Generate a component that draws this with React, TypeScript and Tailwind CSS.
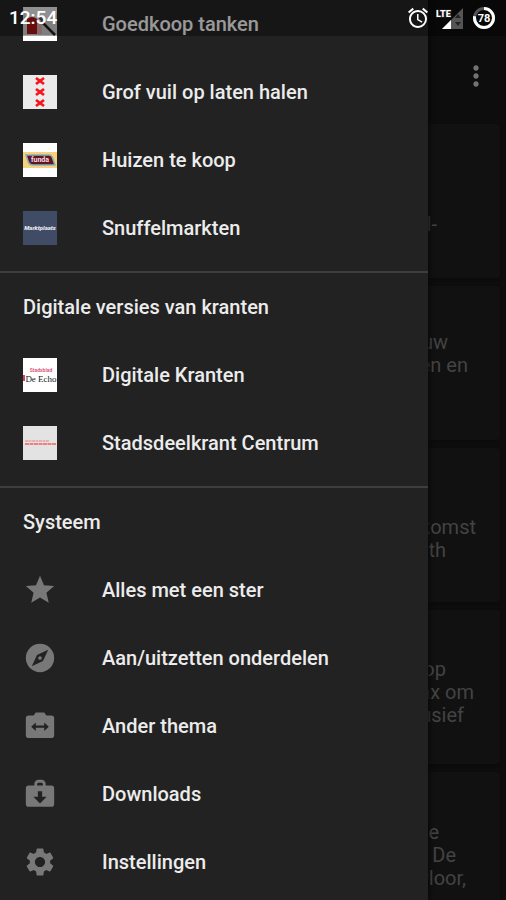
import type { ReactNode } from "react";
import { MdAccessAlarm, MdMoreVert, MdSettings, MdStar } from "react-icons/md";

type Item = { label: string; icon: ReactNode };
type Section = { title?: string; items: Item[] };
type Line = { text: string; end: number };

const tile = "h-[34px] w-[34px]";
const glyph = "h-[34px] w-[34px] text-[#787878]";

function FuelIcon() {
  return (
    <svg viewBox="0 0 34 34" className={tile} aria-hidden="true">
      <rect width="34" height="34" fill="#fff" />
      <rect width="34" height="28" fill="#c4c4c4" />
      <path d="M0 0h34v7L20 16 4 12z" fill="#dedede" />
      <path d="M4 12q5-4 10 0v15H4z" fill="#a01515" />
      <path d="M14 14h5v13h-5z" fill="#cfa0a0" />
      <path d="M20 16l12 12" stroke="#1c1c1c" strokeWidth="2.5" />
      <path d="M16 9l5 7" stroke="#555" strokeWidth="3" />
    </svg>
  );
}

function CrossesIcon() {
  return (
    <svg viewBox="0 0 34 34" className={tile} aria-hidden="true">
      <rect width="34" height="34" fill="#ebebeb" />
      <path
        d="M13 3l8 6M21 3l-8 6M13 14l8 6M21 14l-8 6M13 25l8 6M21 25l-8 6"
        stroke="#f5151b"
        strokeWidth="2.8"
      />
    </svg>
  );
}

function FundaIcon() {
  return (
    <svg viewBox="0 0 34 34" className={tile} aria-hidden="true">
      <rect width="34" height="34" fill="#fff" />
      <rect y="9" width="34" height="16" fill="#fbd07a" />
      <path
        d="M3 12h23q3 0 4 4l2 6H10q-4 0-5-4z"
        fill="#641522"
        stroke="#7fb4bd"
        strokeWidth="1.6"
      />
      <text
        x="17"
        y="19"
        textAnchor="middle"
        fontSize="7"
        fontWeight="700"
        fontFamily="Roboto, sans-serif"
        fill="#f3dfe0"
      >
        funda
      </text>
    </svg>
  );
}

function MarketIcon() {
  return (
    <svg viewBox="0 0 34 34" className={tile} aria-hidden="true">
      <rect width="34" height="34" fill="#404c66" />
      <text
        x="17"
        y="19"
        textAnchor="middle"
        fontSize="6"
        fontWeight="900"
        fontStyle="italic"
        fontFamily="Roboto, sans-serif"
        fill="#e4e6ea"
      >
        Marktplaats
      </text>
    </svg>
  );
}

function EchoIcon() {
  return (
    <svg viewBox="0 0 34 34" className={tile} aria-hidden="true">
      <rect width="34" height="34" fill="#fff" />
      <text
        x="18"
        y="14"
        textAnchor="middle"
        fontSize="5"
        fontWeight="700"
        fontFamily="Roboto, sans-serif"
        fill="#dc5a7c"
      >
        Stadsblad
      </text>
      <rect y="17" width="2" height="6" fill="#d0416a" />
      <text
        x="18"
        y="24"
        textAnchor="middle"
        fontSize="9"
        fontFamily="Liberation Serif, serif"
        fill="#222"
      >
        De Echo
      </text>
    </svg>
  );
}

function CentrumIcon() {
  return (
    <svg viewBox="0 0 34 34" className={tile} aria-hidden="true">
      <rect width="34" height="34" fill="#e3e3e3" />
      <path d="M2 15h24" stroke="#eda0a0" strokeWidth="1.5" strokeDasharray="3 .5" />
      <path d="M2 18h31" stroke="#ee8080" strokeWidth="2" strokeDasharray="4 .5" />
    </svg>
  );
}

function CompassIcon() {
  return (
    <svg viewBox="0 0 24 24" className={glyph} fill="currentColor" aria-hidden="true">
      <path
        fillRule="evenodd"
        d="M12 2a10 10 0 1 0 0 20 10 10 0 0 0 0-20zm5.800 4.200-3.700 7.900-7.900 3.700 3.700-7.900z"
      />
      <circle cx="12" cy="12" r="1.300" />
    </svg>
  );
}

function CameraSwitchIcon() {
  return (
    <svg viewBox="0 0 24 24" className={glyph} fill="currentColor" aria-hidden="true">
      <path
        fillRule="evenodd"
        d="M9 2.500 7.500 4.500H4a2 2 0 0 0-2 2v12a2 2 0 0 0 2 2h16a2 2 0 0 0 2-2v-12a2 2 0 0 0-2-2h-3.500L15 2.500zM9 9.500v2.200h6V9.500l3.200 3-3.200 3v-2.200H9v2.200l-3.200-3z"
      />
    </svg>
  );
}

function DownloadBagIcon() {
  return (
    <svg viewBox="0 0 24 24" className={glyph} fill="currentColor" aria-hidden="true">
      <path
        fillRule="evenodd"
        d="M8 6V5a3 3 0 0 1 3-3h2a3 3 0 0 1 3 3v1h4a2 2 0 0 1 2 2v11a2 2 0 0 1-2 2H4a2 2 0 0 1-2-2V8a2 2 0 0 1 2-2zm2 0h4V5a1 1 0 0 0-1-1h-2a1 1 0 0 0-1 1zm.5 4v4H7.300l4.700 4.700 4.700-4.700h-3.200v-4z"
      />
    </svg>
  );
}

function SignalIcon() {
  return (
    <svg viewBox="0 0 28 24" className="h-6 w-7" role="img" aria-label="LTE">
      <path d="M27 2v21H6z" fill="#555" />
      <path d="M15 14v9H6z" fill="#fff" />
      <path d="M19 12l3-4 3 4zM19 16l3 4 3-4z" fill="#222" />
      <text
        x="0"
        y="11"
        fontSize="9"
        fontWeight="900"
        fontFamily="Roboto, sans-serif"
        fill="#fff"
        stroke="#1a1a1a"
        strokeWidth="2"
        paintOrder="stroke"
      >
        LTE
      </text>
    </svg>
  );
}

function BatteryIcon() {
  return (
    <svg viewBox="0 0 24 24" className="h-6 w-6" role="img" aria-label="78%">
      <circle cx="12" cy="12" r="9.500" fill="none" stroke="#555" strokeWidth="3" />
      <circle
        cx="12"
        cy="12"
        r="9.500"
        fill="none"
        stroke="#fff"
        strokeWidth="3"
        pathLength="100"
        strokeDasharray="78 22"
        transform="rotate(-90 12 12)"
      />
      <text
        x="12"
        y="16"
        textAnchor="middle"
        fontSize="11"
        fontWeight="700"
        fontFamily="Roboto, sans-serif"
        fill="#fff"
      >
        78
      </text>
    </svg>
  );
}

const SECTIONS: Section[] = [
  {
    items: [
      { label: "Goedkoop tanken", icon: <FuelIcon /> },
      { label: "Grof vuil op laten halen", icon: <CrossesIcon /> },
      { label: "Huizen te koop", icon: <FundaIcon /> },
      { label: "Snuffelmarkten", icon: <MarketIcon /> },
    ],
  },
  {
    title: "Digitale versies van kranten",
    items: [
      { label: "Digitale Kranten", icon: <EchoIcon /> },
      { label: "Stadsdeelkrant Centrum", icon: <CentrumIcon /> },
    ],
  },
  {
    title: "Systeem",
    items: [
      { label: "Alles met een ster", icon: <MdStar className={glyph} /> },
      { label: "Aan/uitzetten onderdelen", icon: <CompassIcon /> },
      { label: "Ander thema", icon: <CameraSwitchIcon /> },
      { label: "Downloads", icon: <DownloadBagIcon /> },
      { label: "Instellingen", icon: <MdSettings className={glyph} /> },
    ],
  },
];

// end = space kept free after the line inside its card
const CARDS: Line[][] = [
  [{ text: "l-", end: 63 }],
  [
    { text: "uw", end: 52 },
    { text: "en en", end: 32 },
  ],
  [
    { text: "komst", end: 24 },
    { text: "th", end: 54 },
  ],
  [
    { text: "op", end: 54 },
    { text: "ax om", end: 26 },
    { text: "usief", end: 36 },
  ],
  [
    { text: "e", end: 61 },
    { text: "De", end: 44 },
    { text: "rloor,", end: 34 },
  ],
];

function StatusBar() {
  return (
    <div className="absolute inset-x-0 top-0 z-20 flex h-9 items-center justify-between bg-black/35 pr-[10px] pl-[9px] text-white">
      <time className="text-[19px] font-medium">12:54</time>
      <div className="flex items-center">
        <MdAccessAlarm className="mr-1.5 h-6 w-6" />
        <SignalIcon />
        <span className="w-2" />
        <BatteryIcon />
      </div>
    </div>
  );
}

function NewsPage() {
  return (
    <main className="pt-9 text-[#434343]">
      <header className="flex h-20 items-center justify-end pr-[14px]">
        <button type="button" aria-label="Meer opties" className="text-[#737373]">
          <MdMoreVert className="h-8 w-8" />
        </button>
      </header>
      <div className="flex flex-col gap-2 pt-2 pr-[6px]">
        {CARDS.map((lines, i) => (
          <article
            key={i}
            className="flex h-[154px] flex-col items-end justify-end rounded-sm bg-[#111111] pb-[42px] text-[20px] leading-[23px] shadow-[0_1px_3px_#0b0b0b] nth-[2]:pb-[63px] nth-[3]:pb-[40px] nth-[4]:pb-[37px] nth-[5]:pb-[36px]"
          >
            {lines.map((line) => (
              <p key={line.text} style={{ paddingRight: line.end }}>
                {line.text}
              </p>
            ))}
          </article>
        ))}
      </div>
    </main>
  );
}

function Drawer() {
  return (
    <nav className="absolute inset-y-0 left-0 right-[78px] z-10 overflow-hidden bg-[#222222] shadow-[1px_0_4px_#080808]">
      <div className="-mt-[10px] text-[20px] font-medium text-[#ececec]">
        {SECTIONS.map((section, i) => (
          <section
            key={i}
            className="border-b-2 border-[#3e3e3e] pb-[9px] last:border-b-0"
          >
            {section.title && (
              <h2 className="flex h-[68px] items-center pl-[23px]">{section.title}</h2>
            )}
            <ul>
              {section.items.map((item) => (
                <li key={item.label}>
                  <a href="#" className="flex h-[68px] items-center gap-[45px] pl-[23px]">
                    {item.icon}
                    {item.label}
                  </a>
                </li>
              ))}
            </ul>
          </section>
        ))}
      </div>
    </nav>
  );
}

export default function App() {
  return (
    <div className="relative h-screen overflow-hidden bg-[#0d0d0d] font-[Roboto,sans-serif]">
      <NewsPage />
      <Drawer />
      <StatusBar />
    </div>
  );
}
